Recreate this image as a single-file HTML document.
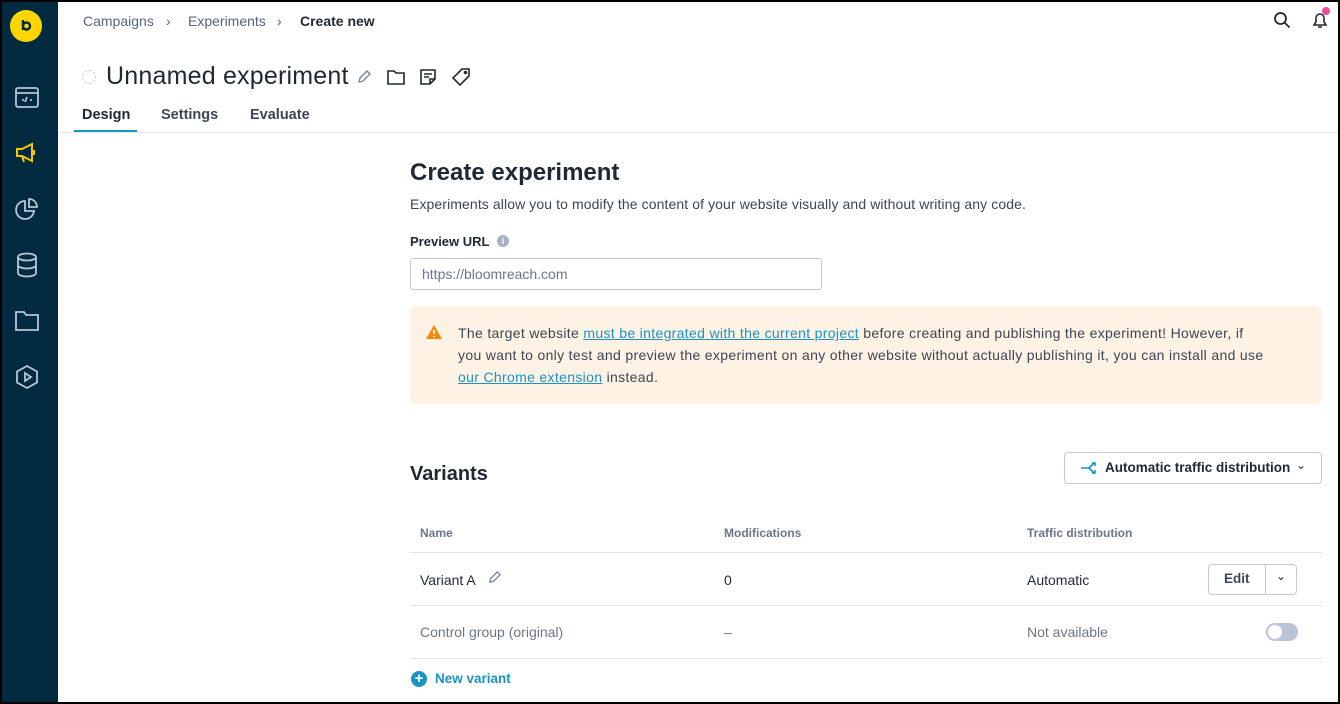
<!DOCTYPE html>
<html><head><style>
*{box-sizing:border-box;margin:0;padding:0}
body{width:1340px;height:704px;background:#000;font-family:"Liberation Sans",sans-serif;color:#1f2933;overflow:hidden;position:relative}
.frame{position:absolute;left:2px;top:2px;width:1336px;height:700px;background:#fff;overflow:hidden}
.side{position:absolute;left:0;top:0;width:56px;height:700px;background:#022a41}
.ic{position:absolute;left:12px}
.abs{position:absolute;white-space:nowrap}
.bc{font-size:14px;color:#56657a;top:11px}
.tab{font-size:14.5px;font-weight:bold;color:#3b4656;top:105px}
a{color:#1a94c4;text-decoration:underline}
.th{font-size:12px;font-weight:bold;color:#6b7689;top:524px}
.td{font-size:14px;top:570px}
.line{position:absolute;left:408px;width:912px;height:1px;background:#dde3ec}
</style></head><body><div class="frame">
<div class="side">
 <div style="position:absolute;left:8px;top:8px;width:32px;height:32px;border-radius:50%;background:#ffd500"></div>
 <svg class="abs" style="left:8px;top:8px" width="32" height="32" viewBox="0 0 32 32"><path d="M13 10v10M13 16a3.5 3.5 0 1 0 7 0a3.5 3.5 0 1 0 -7 0" fill="none" stroke="#022a41" stroke-width="2.4"/></svg>
 <svg class="ic" style="top:84px" width="26" height="24" viewBox="0 0 26 24" fill="none" stroke="#b9c6d8" stroke-width="1.8"><rect x="2" y="2" width="22" height="19" rx="2"/><path d="M2 7h22M8 14h2M16 14h2M13 11l-2 5"/></svg>
 <svg class="ic" style="top:139px" width="26" height="24" viewBox="0 0 26 24" fill="none" stroke="#f2c900" stroke-width="2"><path d="M3 8h5l10-5v17L8 15H3zM8 15l2 6M20 9v5"/></svg>
 <svg class="ic" style="top:195px" width="26" height="24" viewBox="0 0 26 24" fill="none" stroke="#b9c6d8" stroke-width="1.8"><path d="M11 4a9 9 0 1 0 9 10h-9z"/><path d="M15 2a8 8 0 0 1 8 8h-8z"/></svg>
 <svg class="ic" style="top:250px" width="26" height="26" viewBox="0 0 26 26" fill="none" stroke="#b9c6d8" stroke-width="1.8"><ellipse cx="13" cy="5" rx="9" ry="3.5"/><path d="M4 5v16c0 2 4 3.5 9 3.5s9-1.5 9-3.5V5M4 13c0 2 4 3.5 9 3.5s9-1.5 9-3.5"/></svg>
 <svg class="ic" style="top:307px" width="26" height="24" viewBox="0 0 26 24" fill="none" stroke="#b9c6d8" stroke-width="1.8"><path d="M2 3h8l2 3h12v15H2z"/></svg>
 <svg class="ic" style="top:362px" width="26" height="26" viewBox="0 0 26 26" fill="none" stroke="#b9c6d8" stroke-width="1.8"><path d="M13 2l10 5.5v11L13 24 3 18.5v-11z"/><path d="M11 9v8l6-4z"/></svg>
</div>
<div class="abs bc" style="left:81px">Campaigns</div>
<div class="abs bc" style="left:164px">›</div>
<div class="abs bc" style="left:186px">Experiments</div>
<div class="abs bc" style="left:275px">›</div>
<div class="abs bc" style="left:298px;color:#1f2933;font-weight:bold">Create new</div>
<svg class="abs" style="left:1271px;top:9px" width="18" height="18" viewBox="0 0 18 18" fill="none" stroke="#1f2933" stroke-width="1.8"><circle cx="7.5" cy="7.5" r="5.5"/><path d="M11.5 11.5l5 5"/></svg>
<svg class="abs" style="left:1309px;top:8px" width="18" height="20" viewBox="0 0 18 20" fill="none" stroke="#1f2933" stroke-width="1.6"><path d="M3 15h12l-2-3V8a4 4 0 0 0-8 0v4zM7 17h4"/></svg>
<div class="abs" style="left:1320px;top:5px;width:8px;height:8px;border-radius:50%;background:#f0489a"></div>
<div class="abs" style="left:80px;top:68px;width:14px;height:14px;border-radius:50%;border:1.5px dashed #c8d0dc"></div>
<div class="abs" style="left:104px;top:60px;font-size:25px;color:#1f2933;letter-spacing:0.2px">Unnamed experiment</div>
<svg class="abs" style="left:354px;top:67px" width="16" height="16" viewBox="0 0 16 16" fill="none" stroke="#7a869a" stroke-width="1.4"><path d="M3 13l1-4 7-7 3 3-7 7z"/></svg>
<svg class="abs" style="left:384px;top:66px" width="20" height="18" viewBox="0 0 20 18" fill="none" stroke="#1f2933" stroke-width="1.6"><path d="M2 3h6l2 2h8v11H2z"/></svg>
<svg class="abs" style="left:417px;top:66px" width="18" height="18" viewBox="0 0 18 18" fill="none" stroke="#1f2933" stroke-width="1.6"><path d="M2 2h14v9l-5 5H2zM5 6h8M5 9h5M11 16v-5h5"/></svg>
<svg class="abs" style="left:449px;top:65px" width="20" height="20" viewBox="0 0 20 20" fill="none" stroke="#1f2933" stroke-width="1.6"><path d="M11 2h7v7l-9 9-7-7z"/><circle cx="14.5" cy="5.5" r="1"/></svg>
<div class="abs tab" style="left:80px;color:#1f2933">Design</div>
<div class="abs tab" style="left:159px">Settings</div>
<div class="abs tab" style="left:248px">Evaluate</div>
<div class="abs" style="left:72px;top:128px;width:63px;height:3px;background:#1a94c4"></div>
<div class="abs" style="left:56px;top:130px;width:1280px;height:1px;background:#e3e8ef"></div>

<div class="abs" style="left:408px;top:157px;font-size:24px;font-weight:bold">Create experiment</div>
<div class="abs" style="left:408px;top:194px;font-size:14px;color:#3b4656;letter-spacing:0.1px">Experiments allow you to modify the content of your website visually and without writing any code.</div>
<div class="abs" style="left:408px;top:232px;font-size:13px;font-weight:bold">Preview URL</div>
<div class="abs" style="left:495px;top:233px;width:12px;height:12px;border-radius:50%;background:#a7b1c1;color:#fff;font-size:9px;text-align:center;line-height:12px;font-weight:bold">i</div>
<div class="abs" style="left:408px;top:256px;width:412px;height:32px;border:1px solid #c4ccd8;border-radius:3px;font-size:14px;color:#6b7689;padding:7px 11px">https://bloomreach.com</div>
<div class="abs" style="left:408px;top:304px;width:912px;height:98px;background:#fef2e4;border-radius:6px"></div>
<svg class="abs" style="left:424px;top:323px" width="16" height="14" viewBox="0 0 16 14"><path d="M8 0l8 14H0z" fill="#f58a07"/><path d="M8 5v4M8 11v1" stroke="#fff" stroke-width="1.8"/></svg>
<div class="abs" style="left:456px;top:320px;font-size:14px;line-height:22px;color:#3b4656;letter-spacing:0.33px">The target website <a>must be integrated with the current project</a> before creating and publishing the experiment! However, if<br>you want to only test and preview the experiment on any other website without actually publishing it, you can install and use<br><a>our Chrome extension</a> instead.</div>

<div class="abs" style="left:408px;top:461px;font-size:20px;font-weight:bold">Variants</div>
<div class="abs" style="left:1062px;top:450px;width:258px;height:32px;border:1px solid #c4ccd8;border-radius:4px"></div>
<svg class="abs" style="left:1078px;top:458px" width="18" height="16" viewBox="0 0 18 16" fill="none" stroke="#1a94c4" stroke-width="1.6"><path d="M1 8h8M9 8l5-5M9 8l5 5M12 3h3v3M12 13h3v-3"/></svg>
<div class="abs" style="left:1103px;top:458px;font-size:13.5px;font-weight:bold">Automatic traffic distribution</div>
<div class="abs" style="left:1294px;top:456px;font-size:12px">⌄</div>
<div class="abs th" style="left:418px">Name</div>
<div class="abs th" style="left:722px">Modifications</div>
<div class="abs th" style="left:1025px">Traffic distribution</div>
<div class="line" style="top:550px"></div>
<div class="abs td" style="left:418px">Variant A</div>
<svg class="abs" style="left:485px;top:568px" width="15" height="15" viewBox="0 0 16 16" fill="none" stroke="#7a869a" stroke-width="1.4"><path d="M3 13l1-4 7-7 3 3-7 7z"/></svg>
<div class="abs td" style="left:722px">0</div>
<div class="abs td" style="left:1025px">Automatic</div>
<div class="abs" style="left:1206px;top:562px;width:89px;height:31px;border:1px solid #c4ccd8;border-radius:4px"></div>
<div class="abs" style="left:1263px;top:562px;width:1px;height:31px;background:#c4ccd8"></div>
<div class="abs" style="left:1222px;top:569px;font-size:13.5px;font-weight:bold;color:#3b4656">Edit</div>
<div class="abs" style="left:1274px;top:567px;font-size:12px">⌄</div>
<div class="line" style="top:603px"></div>
<div class="abs td" style="left:418px;top:622px;color:#6b7689">Control group (original)</div>
<div class="abs td" style="left:722px;top:622px;color:#6b7689">–</div>
<div class="abs td" style="left:1025px;top:622px;color:#6b7689">Not available</div>
<div class="abs" style="left:1264px;top:621px;width:32px;height:18px;border-radius:9px;background:#b9c4d8"></div>
<div class="abs" style="left:1266px;top:623px;width:14px;height:14px;border-radius:50%;background:#fff"></div>
<div class="line" style="top:656px"></div>
<div class="abs" style="left:409px;top:669px;width:16px;height:16px;border-radius:50%;background:#1a94c4;color:#fff;text-align:center;line-height:16px;font-size:15px;font-weight:bold">+</div>
<div class="abs" style="left:433px;top:669px;font-size:13.5px;font-weight:bold;color:#1a94c4">New variant</div>
</div></body></html>
